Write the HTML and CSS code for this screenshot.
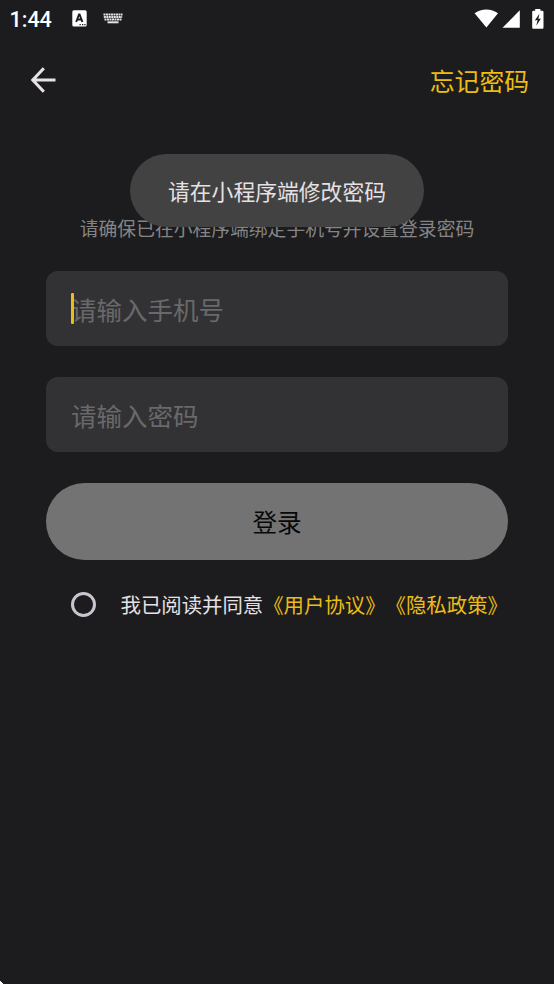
FILE: index.html
```html
<!DOCTYPE html>
<html lang="zh-CN">
<head>
<meta charset="utf-8">
<title>登录</title>
<link rel="stylesheet" href="styles.css">
</head>
<body>
<div class="screen">
  <header class="status">
    <span class="clock">1:44</span>
    <svg class="ime" width="15" height="17" viewBox="0 0 15 17"><rect x="0.3" y="0.3" width="14.4" height="16.2" rx="1.6" fill="#fff"/><path d="M4.2 12 7 4.4h.6L10.4 12M5.2 9.5h4.2" fill="none" stroke="#1c1c1e" stroke-width="1.9"/><path d="M7.5 14.6h1.3M10 14.6h1.3M12.3 14.6h1.3" stroke="#1c1c1e" stroke-width="1.3"/></svg>
    <svg class="keyboard" width="20" height="11" viewBox="0 0 20 11"><g stroke="#e4e4e4" stroke-width="2"><path d="M0.5 1.4h19" stroke-dasharray="2 .5"/><path d="M.8 3.9h18.4" stroke-dasharray="2 .5"/><path d="M1.5 6.5h17" stroke-dasharray="2 .5"/><path d="M4.5 9.3h11"/></g></svg>
    <span class="signals">
      <svg width="24" height="19" viewBox="0 0 24 19"><path d="M.6 4.2C7-.9 17.6-.9 24 4.2L12.4 18.6Z" fill="#fff"/></svg>
      <svg width="18" height="18" viewBox="0 0 18 18"><path d="M17.8.3V17.7H.5Z" fill="#fff"/></svg>
      <svg class="battery" width="12" height="20" viewBox="0 0 12 20"><path d="M3.2 0h5.2v1.8h1.8Q11.5 1.8 11.5 3v15.5q0 1.2-1.2 1.2H1.4Q.2 19.7.2 18.5V3q0-1.2 1.2-1.2h1.8Z" fill="#fff"/><path d="M7.4 4.8 2.8 11.6 5.6 11 4.3 16.8 9 9.6 6.4 10.1Z" fill="#1c1c1e"/></svg>
    </span>
  </header>
  <nav class="bar">
    <svg width="26" height="26" viewBox="0 0 26 26"><path d="M25.5 13H3.2M13.8 1.2 2.8 13l11 11.8" fill="none" stroke="#e6e1e5" stroke-width="3.1"/></svg>
    <a class="forgot">忘记密码</a>
  </nav>
  <main class="content">
    <p class="hint">请确保已在小程序端绑定手机号并设置登录密码</p>
    <div class="field">请输入手机号<i class="caret"></i></div>
    <div class="field">请输入密码</div>
    <div class="login">登录</div>
    <div class="agree"><span class="radio"></span><span class="terms">我已阅读并同意<a>《用户协议》《隐私政策》</a></span></div>
  </main>
  <div class="toast">请在小程序端修改密码</div>
  <i class="corner"></i>
</div>
</body>
</html>
```
FILE: styles.css
```css
* { box-sizing: border-box; }
body { margin: 0; background: #1c1c1e; }
svg { display: block; }
.screen {
  position: relative;
  width: 554px;
  height: 984px;
  overflow: hidden;
  background: #1c1c1e;
  color: #e6e1e5;
  font-family: Roboto, "Noto Sans CJK SC", sans-serif;
  white-space: nowrap;
  text-spacing-trim: space-all;
}
.status { display: flex; align-items: center; height: 37px; padding: 0 10px 0 9.5px; }
.clock { width: 62.5px; color: #fff; font-size: 21.5px; font-weight: 500; line-height: 36px; padding-top: 2px; }
.keyboard { margin-left: 16px; }
.signals { display: flex; align-items: center; gap: 4px; margin-left: auto; }
.battery { margin-left: 8px; }
.bar { display: flex; align-items: center; justify-content: space-between; height: 85px; padding: 0 25px 0 30px; }
.forgot { padding-top: 7px; color: #ecbd16; font-size: 24.8px; line-height: 36px; }
.content { display: flex; flex-direction: column; padding: 0 46px; }
.hint { margin: 94px 0 27px; height: 28px; font-size: 18.8px; line-height: 28px; text-align: center; color: #858585; }
.field {
  position: relative;
  height: 75px;
  margin-bottom: 31px;
  padding-left: 25px;
  border-radius: 12px;
  background: #323234;
  color: #69696b;
  font-size: 25.5px;
  line-height: 80px;
}
.caret { position: absolute; left: 25px; top: 22px; width: 3px; height: 31px; border-radius: 1px; background: #ecbd16; }
.login { height: 77px; border-radius: 39px; background: #737373; color: #080808; font-size: 24.6px; line-height: 81px; text-align: center; }
.agree { display: flex; align-items: center; height: 34px; margin-top: 27px; padding-left: 25px; font-size: 20.4px; line-height: 34px; }
.terms { padding-top: 4px; }
.agree a { color: #ecbd16; }
.radio { width: 25px; height: 25px; margin-right: 24.5px; border: 3px solid #cac4d0; border-radius: 50%; }
.toast {
  position: absolute;
  left: 130px;
  top: 154px;
  width: 294px;
  height: 73px;
  border-radius: 37px;
  background: #424242;
  font-size: 21.8px;
  line-height: 77px;
  text-align: center;
}
.corner { position: absolute; left: 0; bottom: 0; width: 3px; height: 3px; background: linear-gradient(45deg, #fff 50%, transparent 50%); }
```
